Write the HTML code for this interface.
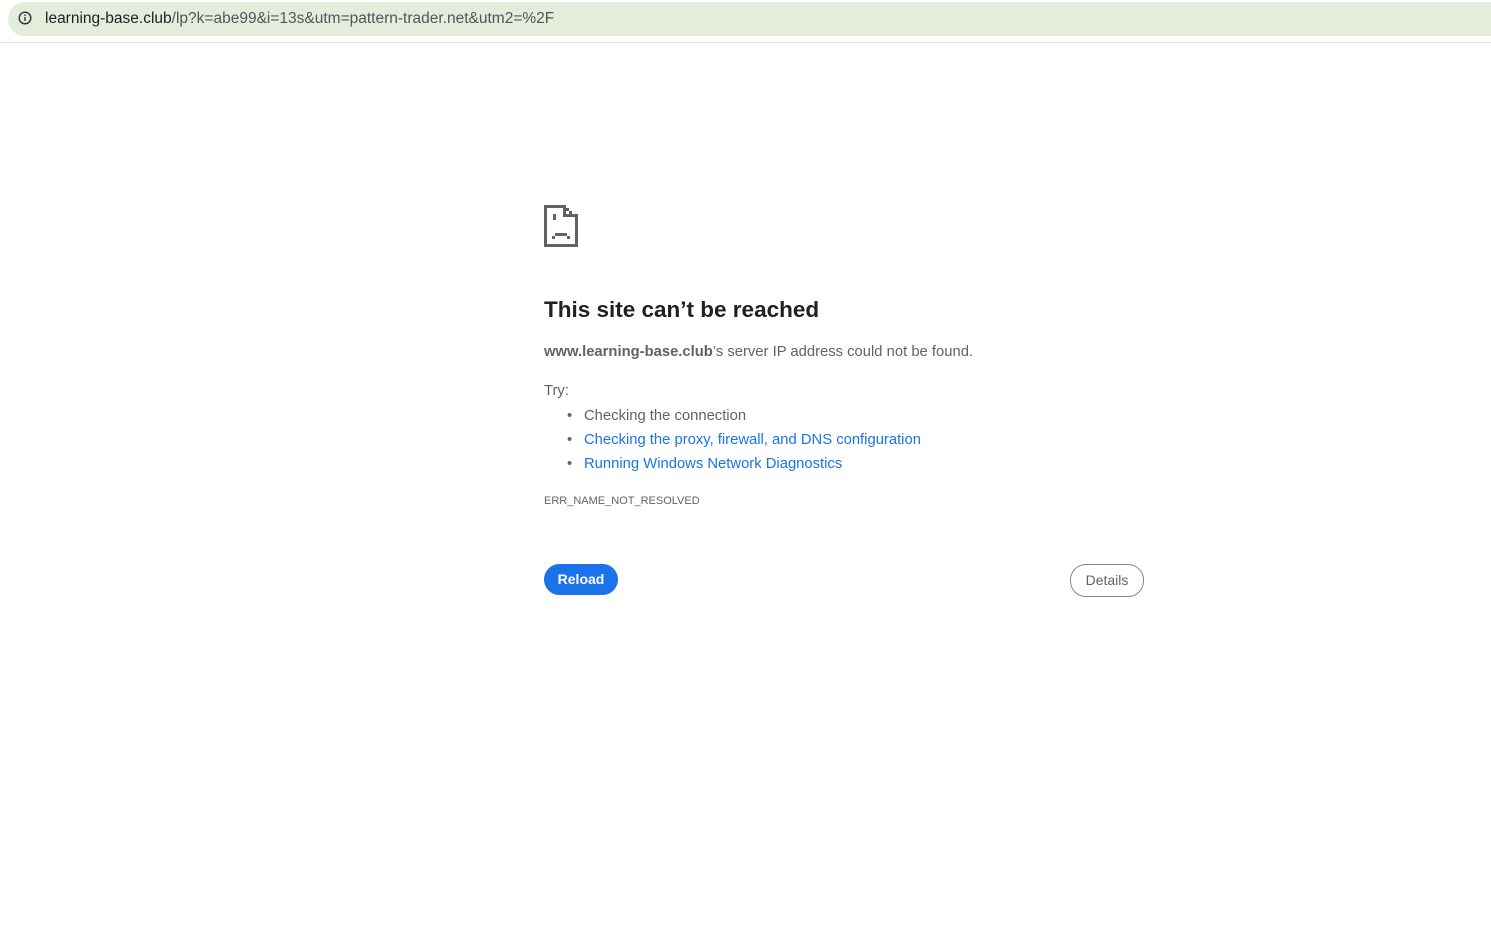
<!DOCTYPE html>
<html><head><meta charset="utf-8"><style>
body{margin:0;width:1491px;height:950px;background:#fff;font-family:"Liberation Sans",sans-serif;position:relative;overflow:hidden}
.bar{position:absolute;left:0;top:0;width:1491px;height:42px;background:#fff;border-bottom:1px solid #e3e3e3}
.omni{position:absolute;left:8px;top:2px;width:1500px;height:34px;background:#e4ecdc;border-radius:17px}
.url{position:absolute;left:45px;top:10px;font-size:15.5px;color:#555}
.url b{font-weight:normal;color:#1f1f1f}
.t{position:absolute;color:#5f6368}
h1{position:absolute;left:544px;top:297px;margin:0;font-size:22.5px;font-weight:bold;color:#202124}
a{color:#1a73e8;text-decoration:none}
</style></head><body>
<div class="bar"><div class="omni"></div>
<svg style="position:absolute;left:18px;top:11px" width="14" height="14" viewBox="0 0 14 14"><circle cx="7" cy="7" r="5.8" fill="none" stroke="#333" stroke-width="1.4"/><rect x="6.3" y="6" width="1.4" height="4" fill="#333"/><rect x="6.3" y="3.6" width="1.4" height="1.4" fill="#333"/></svg>
<div class="url"><b>learning-base.club</b>/lp?k=abe99&amp;i=13s&amp;utm=pattern-trader.net&amp;utm2=%2F</div></div>
<svg style="position:absolute;left:544px;top:205px" width="34" height="42" viewBox="0 0 34 42" shape-rendering="crispEdges" fill="#5f6368">
<rect x="0" y="0" width="3" height="42"/><rect x="0" y="39" width="34" height="3"/><rect x="31" y="9" width="3" height="33"/>
<rect x="0" y="0" width="22" height="3"/><rect x="22" y="3" width="3" height="3"/><rect x="25" y="6" width="3" height="3"/><rect x="28" y="9" width="3" height="3"/>
<rect x="19" y="0" width="3" height="12"/><rect x="19" y="9" width="12" height="3"/>
<rect x="9" y="9" width="3" height="6"/>
<rect x="8" y="31" width="3" height="3"/><rect x="11" y="28" width="12" height="3"/><rect x="23" y="31" width="3" height="3"/>
</svg>
<h1>This site can’t be reached</h1>
<div class="t" style="left:544px;top:344px;font-size:14.8px"><b style="color:#5f6368">www.learning-base.club</b>’s server IP address could not be found.</div>
<div class="t" style="left:544px;top:383px;font-size:14.8px">Try:</div>
<div class="t" style="left:567px;top:404px;font-size:14.8px;line-height:24px">
<div><span style="display:inline-block;width:17px">•</span><span>Checking the connection</span></div>
<div><span style="display:inline-block;width:17px">•</span><a>Checking the proxy, firewall, and DNS configuration</a></div>
<div><span style="display:inline-block;width:17px">•</span><a>Running Windows Network Diagnostics</a></div></div>
<div class="t" style="left:544px;top:495px;font-size:11px">ERR_NAME_NOT_RESOLVED</div>
<div style="position:absolute;left:544px;top:564px;width:74px;height:31px;border-radius:16px;background:#1a73e8;color:#fff;font-size:14px;font-weight:bold;text-align:center;line-height:31px">Reload</div>
<div style="position:absolute;left:1070px;top:564px;width:72px;height:31px;border-radius:16px;border:1px solid #888;color:#5f6368;font-size:14px;text-align:center;line-height:31px">Details</div>
</body></html>
